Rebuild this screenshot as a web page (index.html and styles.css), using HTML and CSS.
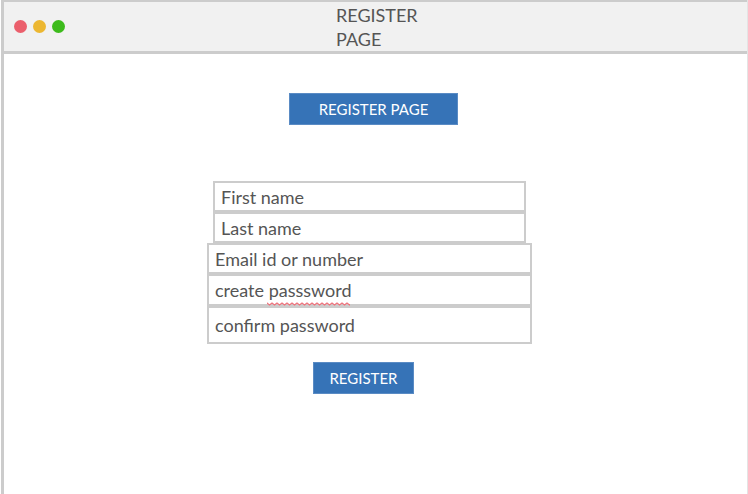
FILE: index.html
```html
<!DOCTYPE html>
<html lang="en">
<head>
<meta charset="utf-8">
<title>Register page</title>
<link rel="stylesheet" href="styles.css">
</head>
<body>
<div class="window">
  <header class="titlebar">
    <div class="dots">
      <span class="dot dot-close"></span>
      <span class="dot dot-minimize"></span>
      <span class="dot dot-expand"></span>
    </div>
    <h1 class="title">REGISTER PAGE</h1>
  </header>
  <main class="content">
    <button type="button" class="button button-heading">REGISTER PAGE</button>
    <form class="form">
      <input class="field field-name" type="text" placeholder="First name" aria-label="First name">
      <input class="field field-name" type="text" placeholder="Last name" aria-label="Last name">
      <input class="field" type="text" placeholder="Email id or number" aria-label="Email id or number">
      <div class="field-wrap">
        <input class="field field-medium" type="text" placeholder="create passsword" aria-label="create passsword">
        <svg class="squiggle" width="83" height="4" viewBox="0 0 83 4" aria-hidden="true">
          <defs>
            <pattern id="wave" width="5" height="4" patternUnits="userSpaceOnUse">
              <path d="M-1 1.8 L0 1 L2.5 3 L5 1 L6 1.8" fill="none" stroke="#f0707a" stroke-width="1.2"/>
            </pattern>
          </defs>
          <rect width="83" height="4" fill="url(#wave)"/>
        </svg>
      </div>
      <input class="field field-tall" type="text" placeholder="confirm password" aria-label="confirm password">
      <button type="button" class="button button-submit">REGISTER</button>
    </form>
  </main>
</div>
</body>
</html>
```
FILE: styles.css
```css
* {
  box-sizing: border-box;
}

body {
  margin: 0;
  background: #fff;
  color: #555;
  font-family: Lato, "Liberation Sans", sans-serif;
  font-size: 18px;
  line-height: 24px;
}

.window {
  min-height: 100vh;
  margin-left: 1px;
  border-left: 3px solid #ccc;
  border-right: 1px solid #e4e4e4;
}

.titlebar {
  display: grid;
  grid-template-columns: 1fr 80px 1fr;
  align-items: center;
  padding-left: 1px;
  background: #f1f1f1;
  border-top: 2px solid #ccc;
  border-bottom: 3px solid #ccc;
}

.dots {
  display: flex;
  gap: 6px;
  padding-left: 9px;
}

.dot {
  width: 13px;
  height: 13px;
  border-radius: 50%;
}

.dot-close {
  background: #eb5f6c;
}

.dot-minimize {
  background: #ecb731;
}

.dot-expand {
  background: #3dbb1c;
}

.title {
  margin: 0;
  padding-top: 1px;
  font-size: 18px;
  font-weight: 400;
}

.content {
  display: flex;
  flex-direction: column;
  align-items: center;
  gap: 56px;
  padding: 39px 4px 39px 0;
}

.button {
  height: 32px;
  padding: 0;
  border: 1px solid #5a8bc4;
  background: #3673b7;
  color: #fff;
  font-family: inherit;
  font-size: 15px;
}

.button-heading {
  width: 169px;
}

.form {
  display: flex;
  flex-direction: column;
  align-items: center;
  width: 325px;
  margin-right: 8px;
}

.field {
  display: block;
  width: 100%;
  height: 31px;
  padding: 0 6px;
  border: 2px solid #ccc;
  background: #fff;
  color: #555;
  font-family: inherit;
  font-size: 18px;
}

.field::placeholder {
  color: #555;
  opacity: 1;
}

.field-name {
  width: 313px;
}

.field-medium {
  height: 32px;
}

.field-tall {
  height: 38px;
}

.field-wrap {
  position: relative;
  z-index: 1;
  width: 100%;
}

.squiggle {
  position: absolute;
  left: 60px;
  bottom: 0;
}

.button-submit {
  width: 101px;
  margin-top: 18px;
  margin-right: 12px;
}
```
